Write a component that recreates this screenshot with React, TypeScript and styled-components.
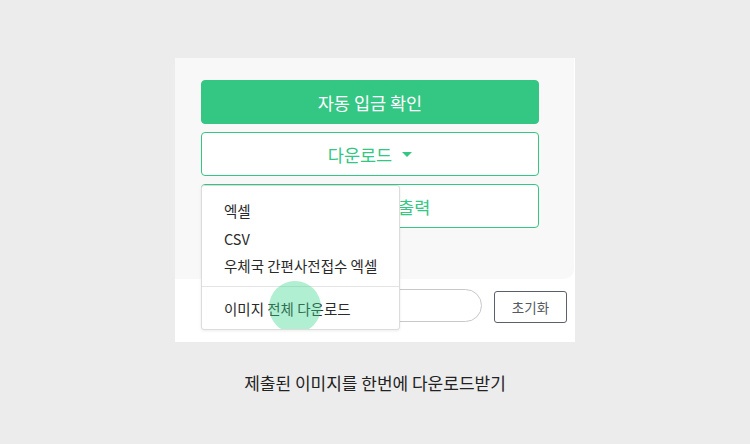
import React from "react";
import styled, { createGlobalStyle } from "styled-components";

const GREEN = "#34c683";

const Global = createGlobalStyle`
  html, body { margin: 0; padding: 0; }
  body {
    background: #ececec;
    font-family: "Noto Sans CJK KR", "Noto Sans", sans-serif;
    width: 750px;
    height: 444px;
    overflow: hidden;
  }
`;

const Page = styled.div`
  display: flex;
  flex-direction: column;
  align-items: center;
  padding-top: 58px;
`;

const Card = styled.div`
  position: relative;
  width: 400px;
  height: 284px;
  background: #ffffff;
  display: flex;
  flex-direction: column;
`;

const Panel = styled.div`
  background: #f8f8f8;
  margin-right: 1px;
  border-bottom-right-radius: 10px;
  padding: 22px 35px 51px 26px;
  display: flex;
  flex-direction: column;
  gap: 8px;
`;

const Button = styled.button<{ $filled?: boolean }>`
  height: 44px;
  box-sizing: border-box;
  border-radius: 4px;
  border: 1.5px solid ${GREEN};
  background: ${(p) => (p.$filled ? GREEN : "#ffffff")};
  color: ${(p) => (p.$filled ? "#ffffff" : GREEN)};
  font-family: inherit;
  font-size: 17.5px;
  display: flex;
  align-items: center;
  justify-content: center;
  gap: 10px;
  padding: 0;
`;

const Caret = styled.span`
  width: 0;
  height: 0;
  border-left: 5px solid transparent;
  border-right: 5px solid transparent;
  border-top: 5px solid ${GREEN};
  margin-top: 1px;
`;

const Bottom = styled.div`
  display: flex;
  align-items: flex-start;
  gap: 12px;
  padding: 10px 0 0 26px;
`;

const Search = styled.div`
  width: 281px;
  height: 33px;
  box-sizing: border-box;
  border: 1px solid #c8c8c8;
  border-radius: 17px;
  background: #fff;
`;

const ResetButton = styled.button`
  margin-top: 2px;
  width: 73px;
  height: 32px;
  box-sizing: border-box;
  border: 1.5px solid #5b616b;
  border-radius: 3px;
  background: #fff;
  color: #555a60;
  font-family: inherit;
  font-size: 13.5px;
  padding: 0;
`;

const Menu = styled.div`
  position: absolute;
  left: 26px;
  top: 127px;
  width: 199px;
  box-sizing: border-box;
  background: #fff;
  border: 1px solid #dcdcdc;
  border-radius: 3px;
  box-shadow: 0 1px 3px rgba(0, 0, 0, 0.08);
  padding: 11px 0 7px;
  display: flex;
  flex-direction: column;
  overflow: hidden;
`;

const Item = styled.div<{ $gapTop?: number }>`
  height: 27.5px;
  display: flex;
  align-items: center;
  padding-left: 22px;
  margin-top: ${(p) => p.$gapTop ?? 0}px;
  font-size: 14.5px;
  color: #2a2a2a;
  white-space: nowrap;
`;

const Divider = styled.div`
  height: 1px;
  background: #e4e4e4;
  margin-top: 6px;
`;

const Ripple = styled.div`
  position: absolute;
  left: 67px;
  top: 95px;
  width: 52px;
  height: 52px;
  border-radius: 50%;
  background: rgba(60, 214, 145, 0.4);
  pointer-events: none;
`;

const Caption = styled.p`
  margin: 30px 0 0;
  font-size: 17px;
  line-height: 22px;
  color: #222;
`;

export default function App() {
  return (
    <>
      <Global />
      <Page>
        <Card>
          <Panel>
            <Button $filled>자동 입금 확인</Button>
            <Button>
              다운로드 <Caret />
            </Button>
            <Button>주문서 일괄 출력</Button>
          </Panel>
          <Bottom>
            <Search />
            <ResetButton>초기화</ResetButton>
          </Bottom>
          <Menu>
            <Item>엑셀</Item>
            <Item>CSV</Item>
            <Item>우체국 간편사전접수 엑셀</Item>
            <Divider />
            <Item $gapTop={8}>이미지 전체 다운로드</Item>
            <Ripple />
          </Menu>
        </Card>
        <Caption>제출된 이미지를 한번에 다운로드받기</Caption>
      </Page>
    </>
  );
}
